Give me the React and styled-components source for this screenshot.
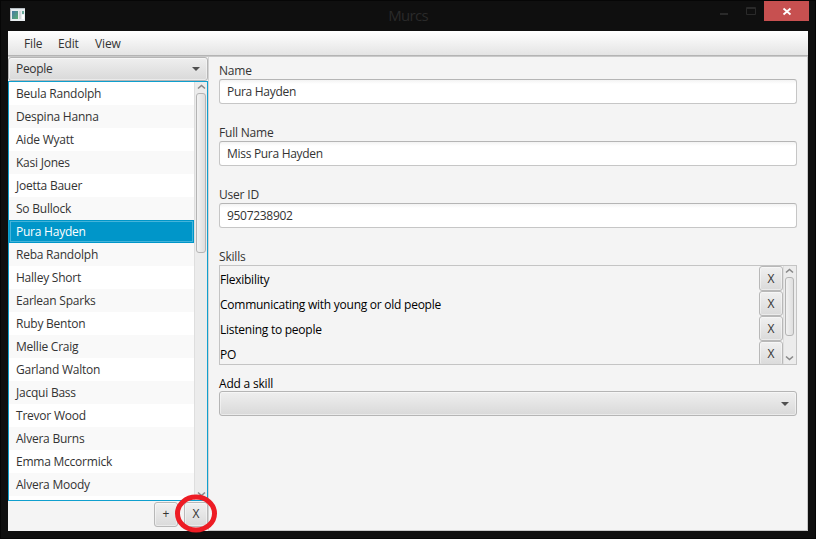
import React from "react";
import styled, { createGlobalStyle } from "styled-components";

const GlobalStyle = createGlobalStyle`
  * { box-sizing: border-box; }
  body {
    margin: 0;
    font: 12px/16px "Open Sans", "Noto Sans", sans-serif;
    letter-spacing: -0.3px;
    color: #333;
  }
`;

const Window = styled.div`
  position: relative;
  width: 816px;
  height: 539px;
  padding: 0 7px 7px;
  background: #0f0f0f;
  border: 1px solid #060606;
  overflow: hidden;
  display: flex;
  flex-direction: column;
`;

const TitleBar = styled.header`
  flex: 0 0 30px;
  display: grid;
  grid-template-columns: 138px 1fr 138px;
`;

const AppIcon = styled.svg`
  margin: 7px 0 0 2px;
`;

const Title = styled.div`
  text-align: center;
  font-size: 15px;
  line-height: 29px;
  letter-spacing: -0.7px;
  color: #2a2a2a;
`;

const WindowButtons = styled.div`
  display: flex;
  justify-content: flex-end;
  align-items: flex-start;
  margin-right: -1px;
`;

const WindowButton = styled.div`
  width: ${(p) => p.$width}px;
  height: 20px;
  background: ${(p) => (p.$close ? "#c75050" : "transparent")};
  display: flex;
  svg { display: block; }
`;

const Client = styled.div`
  flex: 1;
  min-height: 0;
  background: #f4f4f4;
  display: flex;
  flex-direction: column;
`;

const MenuBar = styled.nav`
  flex: 0 0 26px;
  display: flex;
  gap: 16px;
  padding: 5px 16px 0;
  background: linear-gradient(#fff, #e3e3e3);
  border-bottom: 1px solid #c9c9c9;
  box-shadow: inset 0 -1px #b4b4b4;
`;

const MenuItem = styled.span`
  width: ${(p) => p.$width}px;
  white-space: nowrap;
  letter-spacing: -0.15px;
`;

const Body = styled.main`
  flex: 1;
  min-height: 0;
  display: grid;
  grid-template-columns: 200px 600px;
`;

const Sidebar = styled.aside`
  display: flex;
  flex-direction: column;
  min-height: 0;
`;

const Select = styled.div`
  flex: none;
  height: ${(p) => p.$height}px;
  display: flex;
  align-items: center;
  justify-content: space-between;
  padding: 0 7px;
  border: 1px solid #b5b5b5;
  border-radius: 3px;
  background: linear-gradient(#efefef, #d9d9d9);
  box-shadow: inset 0 0 0 1px rgba(255, 255, 255, 0.45);
`;

const List = styled.div`
  flex: 0 0 420px;
  display: flex;
  border: 1px solid #0f9fce;
  background: #fff;
`;

const Rows = styled.div`
  flex: 1;
  overflow: hidden;
`;

const Row = styled.div`
  height: 23px;
  padding: 4px 7px 0;
  white-space: nowrap;
  letter-spacing: -0.23px;
  color: ${(p) => (p.$selected ? "#fff" : "#333")};
  background: ${(p) => (p.$selected ? "#0096c9" : p.$odd ? "#f9f9f9" : "#fff")};
  box-shadow: ${(p) =>
    p.$selected ? "inset 0 0 0 1px #0096c9, inset 0 0 0 2px #45b4da" : "none"};
`;

const Track = styled.div`
  flex: 0 0 13px;
  display: flex;
  flex-direction: column;
  align-items: center;
  background: #ececec;
  border-left: 1px solid #dedede;
  overflow: hidden;
  svg { flex: none; display: block; }
`;

const SkillTrack = styled(Track)`
  padding-right: 2px;
`;

const Thumb = styled.div`
  flex: 0 0 ${(p) => p.$height}px;
  width: ${(p) => p.$width}px;
  margin-bottom: auto;
  border: 1px solid #b4b4b4;
  border-radius: 3px;
  background: linear-gradient(90deg, #f2f2f2, #dedede);
`;

const Actions = styled.div`
  display: flex;
  justify-content: flex-end;
  gap: 6px;
  padding-top: 1px;
`;

const Button = styled.button`
  flex: none;
  width: 24px;
  height: 25px;
  padding: 0 0 ${(p) => (p.$raised ? 2 : 0)}px;
  border: 1px solid #b8b8b8;
  border-radius: 3px;
  background: linear-gradient(#f0f0f0, #dadada);
  box-shadow: inset 0 0 0 1px rgba(255, 255, 255, 0.45);
  font: inherit;
  line-height: 20px;
  color: #333;
`;

const Form = styled.section`
  padding: 6px 10px 0;
  border: solid #c8c8c8;
  border-width: 0 1px 1px;
  border-left-color: #d4d4d4;
`;

const Field = styled.div`
  height: 62px;
`;

const Label = styled.div`
  height: 16px;
  letter-spacing: -0.2px;
  color: #333;
`;

const AddLabel = styled(Label)`
  line-height: 18px;
  color: #000;
`;

const Input = styled.div`
  height: 25px;
  padding: 4px 7px;
  border: 1px solid #c6c6c6;
  border-top-color: #b5b5b5;
  border-radius: 3px;
  background: linear-gradient(#f3f3f3, #fff 4px);
`;

const Skills = styled.div`
  display: flex;
  height: 100px;
  margin: 0 0 10px;
  border: 1px solid #c4c4c4;
  overflow: hidden;
`;

const SkillRows = styled.div`
  flex: 1;
`;

const Skill = styled.div`
  display: flex;
  justify-content: space-between;
  height: 25px;
  color: #000;
  span { line-height: 28px; letter-spacing: -0.25px; }
`;

const Highlight = styled.svg`
  position: absolute;
  left: 173px;
  top: 492px;
`;

const Arrow = () => (
  <svg width="8" height="4"><path d="M0 0H8L4 4Z" fill="#505050" /></svg>
);
const Chevron = ({ down }) => (
  <svg width="11" height="11" viewBox="0 0 11 11">
    <path d={down ? "M2 3.5L5.5 6.5L9 3.5" : "M2 6.5L5.5 3.5L9 6.5"} fill="none" stroke="#888" strokeWidth="1.6" />
  </svg>
);

const PEOPLE = [
  "Beula Randolph", "Despina Hanna", "Aide Wyatt", "Kasi Jones", "Joetta Bauer", "So Bullock",
  "Pura Hayden", "Reba Randolph", "Halley Short", "Earlean Sparks", "Ruby Benton", "Mellie Craig",
  "Garland Walton", "Jacqui Bass", "Trevor Wood", "Alvera Burns", "Emma Mccormick", "Alvera Moody",
];
const FIELDS = [["Name", "Pura Hayden"], ["Full Name", "Miss Pura Hayden"], ["User ID", "9507238902"]];
const SKILLS = ["Flexibility", "Communicating with young or old people", "Listening to people", "PO"];

export default function App() {
  return (
    <Window>
      <GlobalStyle />
      <TitleBar>
        <AppIcon width="15" height="13">
          <defs>
            <linearGradient id="screen" x2="1" y2="1">
              <stop stopColor="#4679a5" /><stop offset="1" stopColor="#58ad70" />
            </linearGradient>
          </defs>
          <path d="M0 0H15V13H0Z" fill="#e8edf0" />
          <path d="M0 .5H15M.5 0V13" stroke="#b5bdc2" />
          <path d="M2 3H8V11H2Z" fill="url(#screen)" />
          <path d="M9 3H11V11H9Z" fill="#d2d6d8" />
          <path d="M12 3H14V6H12Z" fill="#69a99b" />
          <path d="M12 7H14V11H12Z" fill="#fff" />
        </AppIcon>
        <Title>Murcs</Title>
        <WindowButtons>
          <WindowButton $width={26}>
            <svg width="26" height="20"><path d="M0 12H8V14H0Z" fill="#2a2a2a" /></svg>
          </WindowButton>
          <WindowButton $width={18}>
            <svg width="18" height="20"><path d="M.5 6.5H9.5V13.5H.5ZM0 7.5H10" fill="none" stroke="#2a2a2a" /></svg>
          </WindowButton>
          <WindowButton $width={45} $close>
            <svg width="45" height="20"><path d="M19.5 7.5L26.5 13.5M26.5 7.5L19.5 13.5" stroke="#fff" strokeWidth="1.8" /></svg>
          </WindowButton>
        </WindowButtons>
      </TitleBar>
      <Client>
        <MenuBar>
          <MenuItem $width={18}>File</MenuItem>
          <MenuItem $width={21}>Edit</MenuItem>
          <MenuItem $width={26}>View</MenuItem>
        </MenuBar>
        <Body>
          <Sidebar>
            <Select $height={24}>People<Arrow /></Select>
            <List>
              <Rows>
                {PEOPLE.map((name, i) => (
                  <Row key={name} $odd={i % 2 === 1} $selected={name === "Pura Hayden"}>{name}</Row>
                ))}
              </Rows>
              <Track><Chevron /><Thumb $width={10} $height={160} /><Chevron down /></Track>
            </List>
            <Actions><Button $raised>+</Button><Button $raised>X</Button></Actions>
          </Sidebar>
          <Form>
            {FIELDS.map(([label, value]) => (
              <Field key={label}><Label>{label}</Label><Input>{value}</Input></Field>
            ))}
            <Label>Skills</Label>
            <Skills>
              <SkillRows>
                {SKILLS.map((skill) => (
                  <Skill key={skill}><span>{skill}</span><Button>X</Button></Skill>
                ))}
              </SkillRows>
              <SkillTrack><Chevron /><Thumb $width={9} $height={59} /><Chevron down /></SkillTrack>
            </Skills>
            <AddLabel>Add a skill</AddLabel>
            <Select $height={25}><span /><Arrow /></Select>
          </Form>
        </Body>
      </Client>
      <Highlight width="45" height="42">
        <ellipse cx="22" cy="20.5" rx="18.5" ry="16.5" fill="none" stroke="#ed1c24" strokeWidth="5" />
      </Highlight>
    </Window>
  );
}
